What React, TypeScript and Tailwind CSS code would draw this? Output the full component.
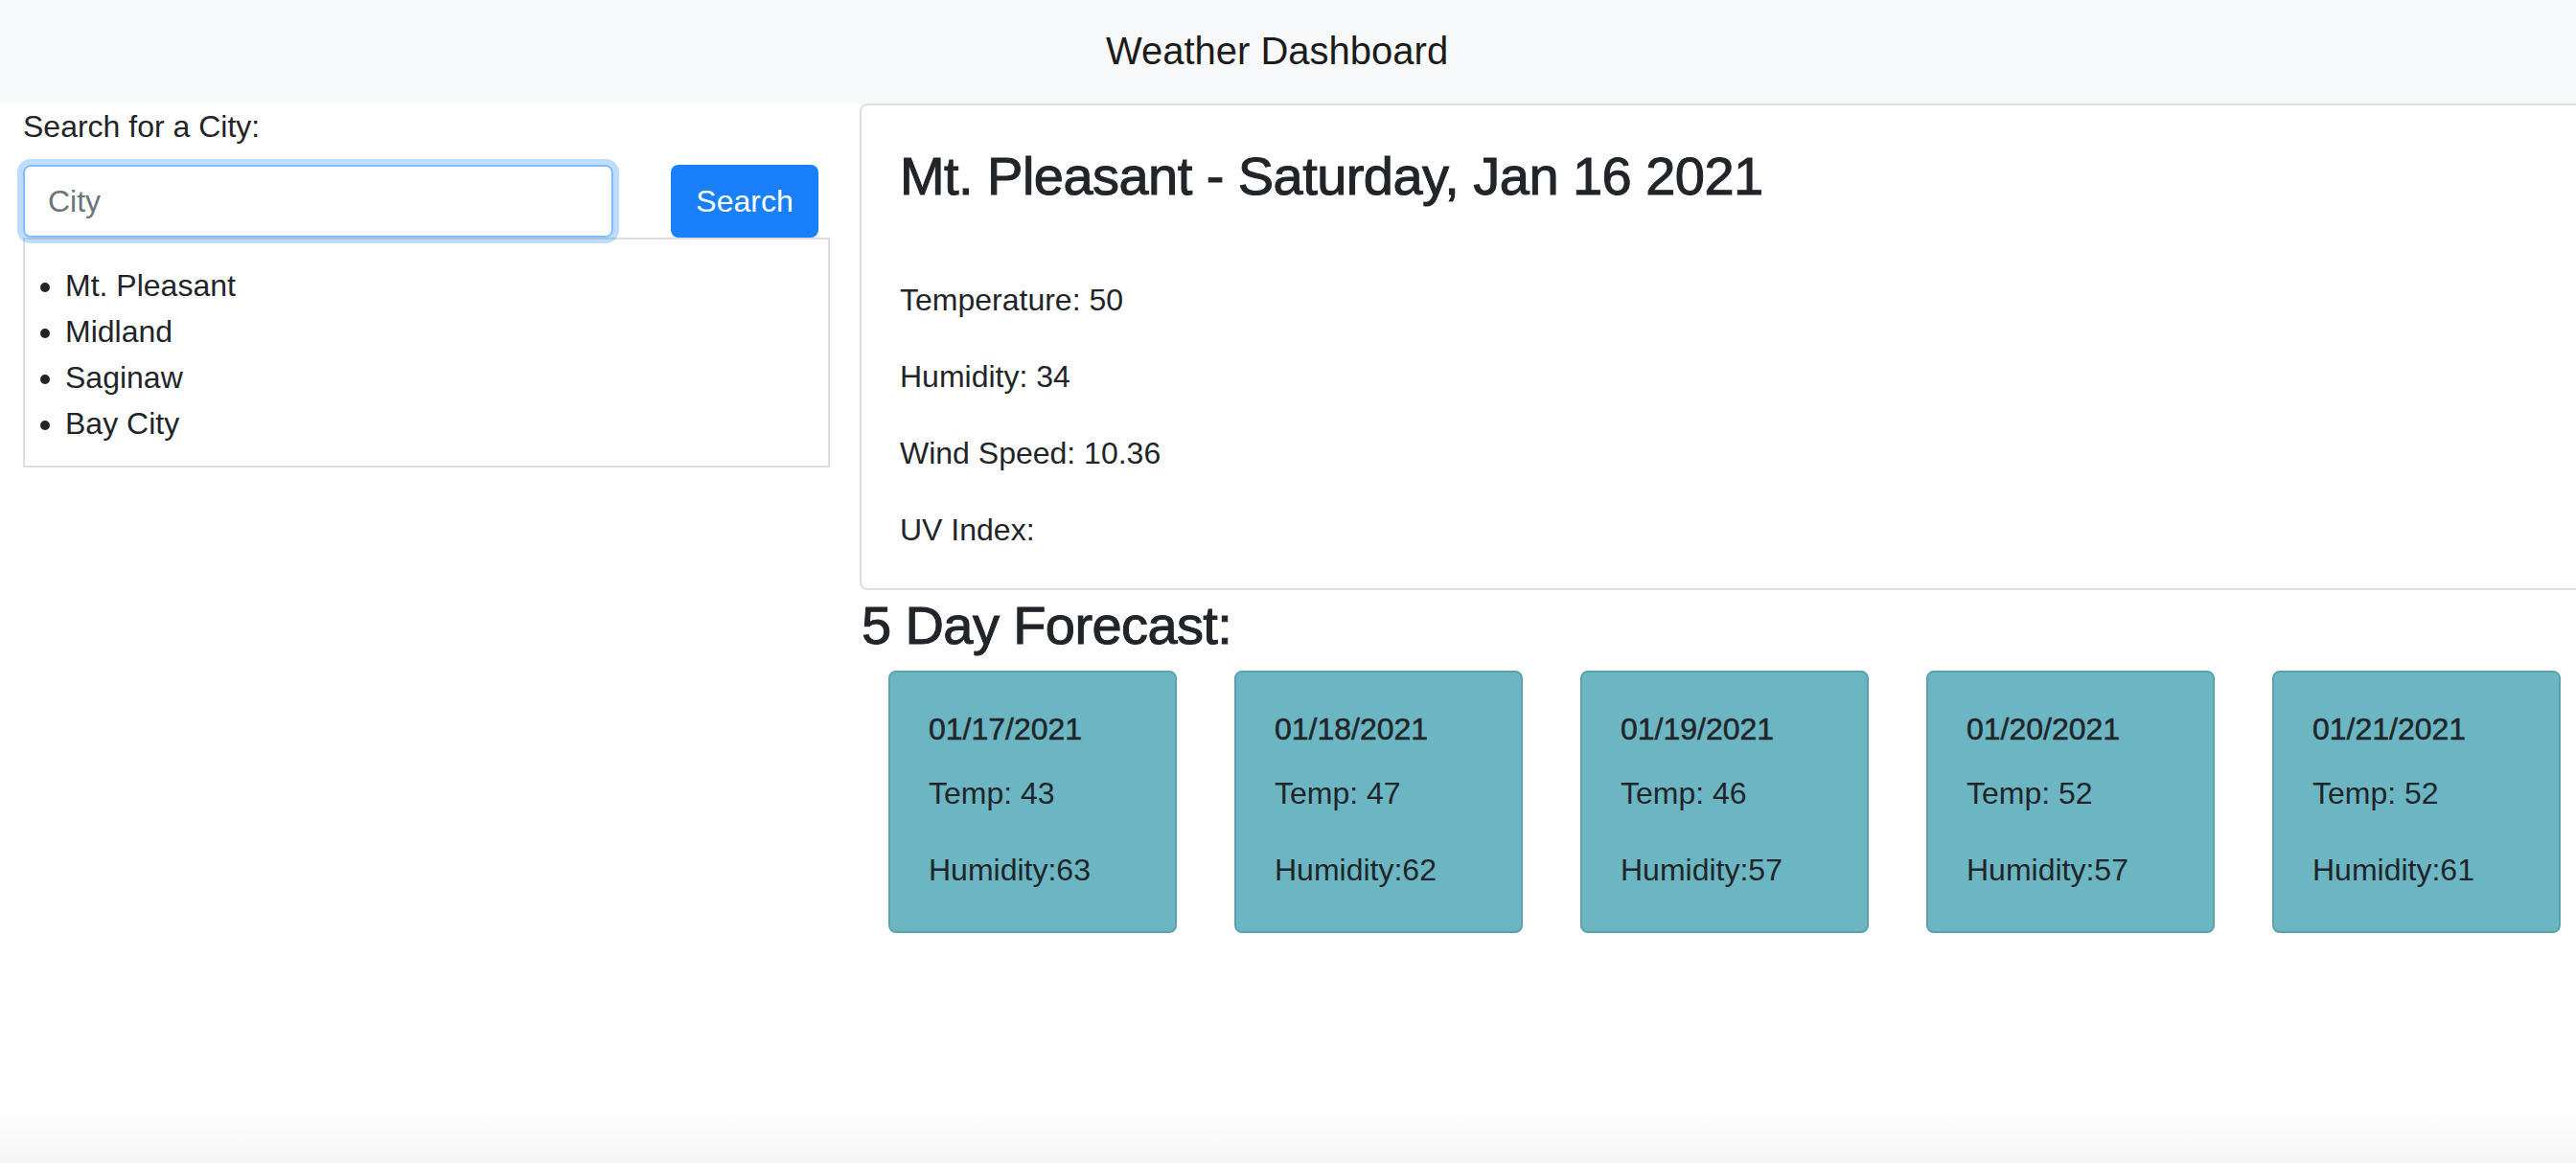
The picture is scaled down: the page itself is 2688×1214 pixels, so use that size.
import React from "react";

const forecast = [
  { date: "01/17/2021", temp: 43, hum: 63 },
  { date: "01/18/2021", temp: 47, hum: 62 },
  { date: "01/19/2021", temp: 46, hum: 57 },
  { date: "01/20/2021", temp: 52, hum: 57 },
  { date: "01/21/2021", temp: 52, hum: 61 },
];

const cities = ["Mt. Pleasant", "Midland", "Saginaw", "Bay City"];

export default function App() {
  return (
    <div className="w-[2688px] h-[1214px] overflow-hidden bg-white flex flex-col font-['Liberation_Sans',Arial,sans-serif] text-[#212529]">
      <header className="h-[108px] shrink-0 bg-[#f8f9fa] flex items-center justify-center pr-[23px] pb-[3px]">
        <h1 className="text-[40px] leading-[48px] text-[#1c1c1c]">Weather Dashboard</h1>
      </header>

      <div className="flex flex-1 min-h-0">
        <aside className="w-[896px] shrink-0 pl-[24px] pr-[30px]">
          <label className="block text-[32px] leading-[48px] mb-[16px]">Search for a City:</label>
          <div className="flex items-start">
            <input
              type="text"
              placeholder="City"
              className="w-[616px] h-[76px] border-2 border-[#80bdff] rounded-[8px] px-[24px] text-[32px] text-[#495057] placeholder:text-[#6c757d] outline-none shadow-[0_0_0_6px_rgba(0,123,255,0.25)]"
            />
            <button className="ml-[60px] h-[76px] w-[154px] bg-[#197ffb] text-white rounded-[8px] text-[32px] leading-[48px]">
              Search
            </button>
          </div>
          <div className="border-2 border-[#dedede] pt-[24px] pb-[20px]">
            <ul className="list-disc pl-[42px]">
              {cities.map((c) => (
                <li key={c} className="text-[32px] leading-[48px]">
                  {c}
                </li>
              ))}
            </ul>
          </div>
        </aside>

        <main className="w-[1820px] shrink-0 pl-px">
          <section className="border-2 border-[#dfdfdf] rounded-[8px] px-[40px] pt-[40px] pb-[37px]">
            <h3 className="text-[56px] leading-[67px] tracking-[-0.55px] mb-[72px] [-webkit-text-stroke:1px_#212529]">
              Mt. Pleasant - Saturday, Jan 16 2021
            </h3>
            <p className="text-[32px] leading-[48px] mb-[32px]">Temperature: 50</p>
            <p className="text-[32px] leading-[48px] mb-[32px]">Humidity: 34</p>
            <p className="text-[32px] leading-[48px] mb-[32px]">Wind Speed: 10.36</p>
            <p className="text-[32px] leading-[48px]">UV Index:</p>
          </section>

          <h3 className="text-[56px] leading-[67px] tracking-[-0.6px] mt-[3px] mb-[14px] pl-[2px] [-webkit-text-stroke:1px_#212529]">
            5 Day Forecast:
          </h3>

          <div className="flex">
            {forecast.map((f) => (
              <div
                key={f.date}
                className="w-[301px] shrink-0 mx-[30px] bg-[#6bb6c2] border-2 border-[#5aa2ad] rounded-[8px] p-[40px]"
              >
                <h6 className="text-[32px] leading-[38px] mb-[24px] [-webkit-text-stroke:0.5px_#212529]">{f.date}</h6>
                <p className="text-[32px] leading-[48px] mb-[32px]">Temp: {f.temp}</p>
                <p className="text-[32px] leading-[48px]">Humidity:{f.hum}</p>
              </div>
            ))}
          </div>
        </main>
      </div>

      <div className="h-[57px] shrink-0 bg-linear-to-b from-white to-[#f5f5f5]" />
    </div>
  );
}
